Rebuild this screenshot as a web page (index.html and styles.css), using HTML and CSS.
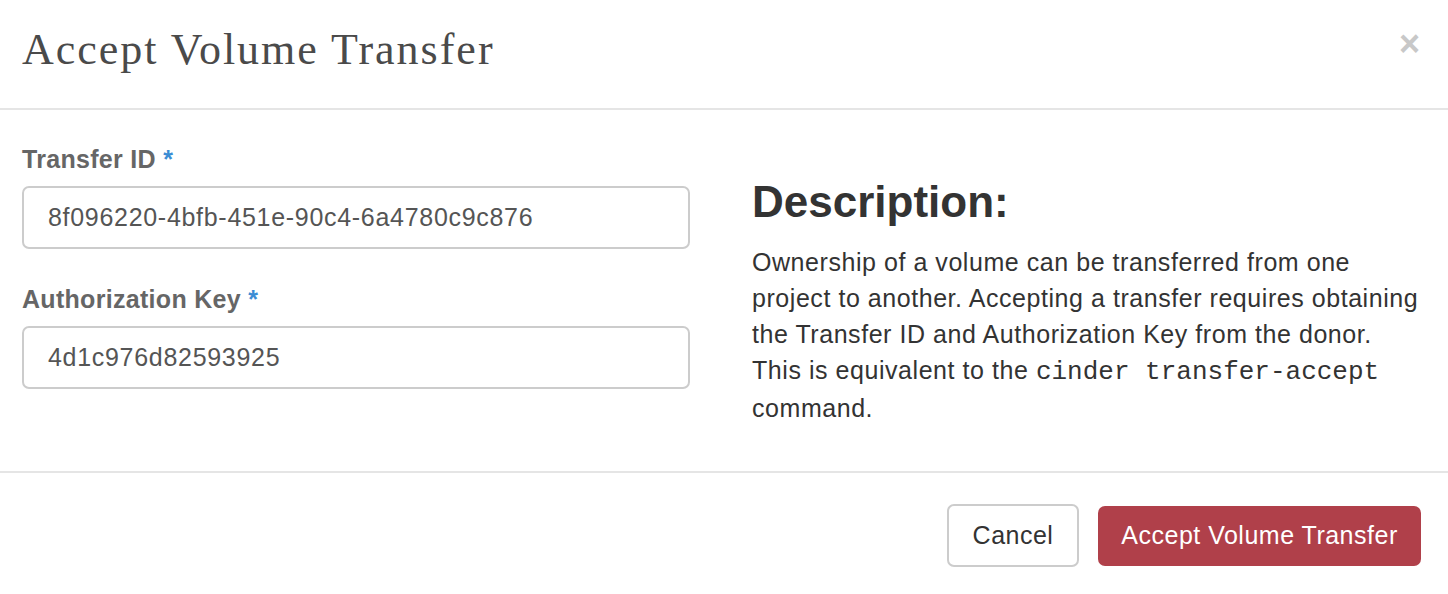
FILE: index.html
```html
<!DOCTYPE html>
<html>
<head>
<meta charset="utf-8">
<link rel="stylesheet" href="styles.css">
</head>
<body>
<div class="modal">
  <div class="modal-header">
    <h1 class="modal-title">Accept Volume Transfer</h1>
    <span class="close">&times;</span>
  </div>
  <div class="modal-body">
    <div class="form-col">
      <div class="field">
        <label class="label">Transfer ID <span class="req">*</span></label>
        <div class="input">8f096220-4bfb-451e-90c4-6a4780c9c876</div>
      </div>
      <div class="field">
        <label class="label">Authorization Key <span class="req">*</span></label>
        <div class="input">4d1c976d82593925</div>
      </div>
    </div>
    <div class="desc-col">
      <h3 class="desc-title">Description:</h3>
      <p class="desc-text">Ownership of a volume can be transferred from one<br>project to another. Accepting a transfer requires obtaining<br>the Transfer ID and Authorization Key from the donor.<br>This is equivalent to the <code>cinder transfer-accept</code><br>command.</p>
    </div>
  </div>
  <div class="modal-footer">
    <button class="btn btn-default">Cancel</button>
    <button class="btn btn-primary">Accept Volume Transfer</button>
  </div>
</div>
</body>
</html>
```
FILE: styles.css
```css
* { box-sizing: border-box; }
html, body { margin: 0; padding: 0; background: #fff; }
body { font-family: "Liberation Sans", Arial, sans-serif; color: #333; }
.modal { width: 1448px; height: 594px; }
.modal-header {
  height: 110px;
  border-bottom: 2px solid #e5e5e5;
  display: flex;
  align-items: flex-start;
  justify-content: space-between;
  padding: 0 28px 0 22px;
}
.modal-title {
  margin: 0;
  padding-top: 24px;
  font-family: "Liberation Serif", "Times New Roman", serif;
  font-weight: 400;
  font-size: 44px;
  line-height: 52px;
  color: #4a4a4a;
  letter-spacing: 2px;
}
.close {
  margin-top: 26px;
  font-size: 36px;
  line-height: 36px;
  font-weight: 700;
  color: #c8c8c8;
}
.modal-body {
  height: 363px;
  border-bottom: 2px solid #e5e5e5;
  display: flex;
  padding: 0 22px;
}
.form-col { width: 668px; flex-shrink: 0; padding-top: 34px; }
.field { margin-bottom: 35px; }
.label {
  display: block;
  font-weight: 700;
  font-size: 25px;
  line-height: 30px;
  letter-spacing: 0.3px;
  color: #666;
  margin-bottom: 12px;
}
.req { color: #3b8dd4; }
.input {
  height: 63px;
  border: 2px solid #ccc;
  border-radius: 7px;
  padding: 0 24px;
  font-size: 25px;
  line-height: 59px;
  letter-spacing: 0.7px;
  color: #555;
}
.desc-col { margin-left: 62px; padding-top: 66px; }
.desc-title {
  margin: 0 0 16px 0;
  font-size: 44px;
  line-height: 52px;
  font-weight: 700;
  color: #333;
}
.desc-text {
  margin: 0;
  font-size: 25px;
  line-height: 36px;
  letter-spacing: 0.55px;
  color: #333;
  white-space: nowrap;
}
code {
  font-family: "Liberation Mono", "Courier New", monospace;
  font-size: 26px;
  letter-spacing: 0;
  color: #333;
}
.modal-footer {
  display: flex;
  justify-content: flex-end;
  align-items: center;
  gap: 19px;
  padding: 31px 27px 0 0;
}
.btn {
  font-family: "Liberation Sans", Arial, sans-serif;
  font-size: 25px;
  letter-spacing: 0.5px;
  border-radius: 7px;
  cursor: pointer;
}
.btn-default {
  height: 63px;
  width: 132px;
  background: #fff;
  color: #333;
  border: 2px solid #ccc;
}
.btn-primary {
  height: 60px;
  width: 323px;
  background: #b0404a;
  color: #fff;
  border: none;
}
```
